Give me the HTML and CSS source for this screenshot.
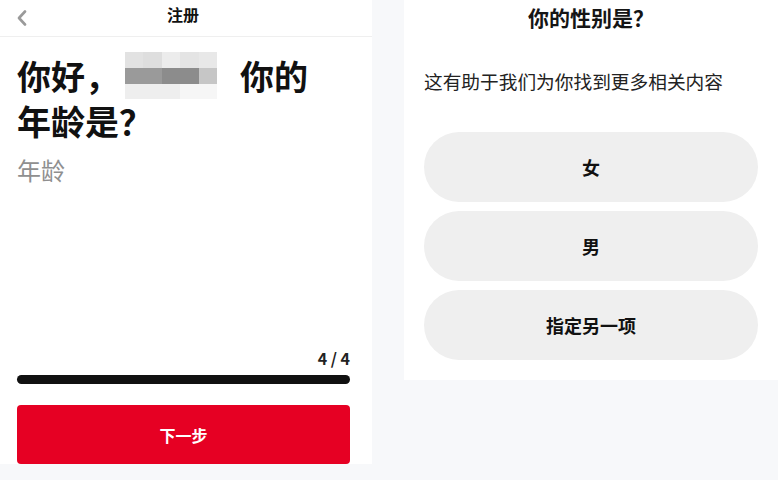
FILE: index.html
```html
<!DOCTYPE html>
<html lang="zh-CN">
<head>
    <meta charset="UTF-8">
    <meta name="viewport" content="width=device-width, initial-scale=1.0">
    <title>注册</title>
    <link rel="stylesheet" href="styles.css">
</head>
<body>
    <div class="screens">
        <!-- Age step -->
        <div class="panel age">
            <div class="topbar">
                <span class="back">
                    <svg width="12" height="16" viewBox="0 0 12 16"><path d="M9 1.5 L3 8 L9 14.5" fill="none" stroke="#9a9a9a" stroke-width="2.6" stroke-linecap="round" stroke-linejoin="round"/></svg>
                </span>
                <span class="topbar-title">注册</span>
            </div>

            <div class="age-body">
                <h1 class="headline">
                    <span class="line">你好，<span class="blur">
                        <i class="b1"></i><i class="b2"></i><i class="b3"></i><i class="b4"></i><i class="b5"></i>
                        <i class="b6"></i><i class="b6"></i><i class="b7"></i><i class="b7"></i><i class="b8"></i>
                        <i class="b9"></i><i class="b9"></i><i class="b9"></i><i class="b0"></i><i class="b0"></i>
                    </span>你的</span>
                    <span class="line">年龄是？</span>
                </h1>
                <div class="age-input">年龄</div>

                <div class="spacer"></div>

                <div class="step">4 / 4</div>
                <div class="progress"><div class="progress-fill" style="width: 100%"></div></div>
                <button class="next">下一步</button>
            </div>
        </div>

        <!-- Gender step -->
        <div class="panel gender">
            <h2>你的性别是？</h2>
            <p class="hint">这有助于我们为你找到更多相关内容</p>
            <div class="options">
                <button class="option">女</button>
                <button class="option">男</button>
                <button class="option">指定另一项</button>
            </div>
        </div>
    </div>
</body>
</html>
```

FILE: styles.css
```css
/* General Styles */
* {
    box-sizing: border-box;
    margin: 0;
    padding: 0;
    font-family: "Noto Sans CJK SC", "Liberation Sans", sans-serif;
}
body {
    background-color: #f7f8fa;
    width: 778px;
    height: 480px;
    overflow: hidden;
}
.screens {
    display: flex;
    align-items: flex-start;
    gap: 32px;
}
.panel {
    background-color: #ffffff;
    color: #111;
}

/* Age panel */
.age {
    width: 372px;
    height: 464px;
    display: flex;
    flex-direction: column;
}
.topbar {
    height: 37px;
    border-bottom: 1px solid #efefef;
    display: flex;
    align-items: center;
    justify-content: center;
    position: relative;
}
.back {
    position: absolute;
    left: 16px;
    top: 7px;
}
.topbar-title {
    font-size: 16px;
    font-weight: bold;
    margin-top: -8px;
    margin-left: -6px;
}
.age-body {
    flex: 1;
    display: flex;
    flex-direction: column;
    padding: 15px 22px 0 17px;
}
.headline {
    font-size: 34px;
    font-weight: bold;
    line-height: 44px;
}
.line {
    display: flex;
    align-items: center;
}
.blur {
    display: grid;
    grid-template-columns: repeat(5, 18.4px);
    grid-template-rows: 16px 16px 15px;
    margin: 0 23px 0 6px;
    width: 92px;
}
.blur i { display: block; }
.b1 { background: #e2e2e2; }
.b2 { background: #dedede; }
.b3 { background: #ececec; }
.b4 { background: #e4e4e4; }
.b5 { background: #e8e8e8; }
.b6 { background: #9a9a9a; }
.b7 { background: #8c8c8c; }
.b8 { background: #c6c6c6; }
.b9 { background: #eeeeee; }
.b0 { background: #f6f6f6; }

.age-input {
    font-size: 24px;
    color: #8f8f8f;
    margin-top: 9px;
}
.spacer {
    flex: 1;
}
.step {
    text-align: right;
    font-size: 16px;
    font-weight: bold;
    color: #222;
    line-height: 20px;
    margin-bottom: 2px;
}
.progress {
    height: 9px;
    border-radius: 5px;
    background-color: #e5e5e5;
    margin-top: 5px;
}
.progress-fill {
    height: 100%;
    border-radius: 5px;
    background-color: #111;
}
.next {
    margin-top: 21px;
    height: 59px;
    border: none;
    border-radius: 4px;
    background-color: #e60023;
    color: #fff;
    font-size: 16px;
    font-weight: bold;
}

/* Gender panel */
.gender {
    width: 374px;
    height: 380px;
    padding: 3px 20px 0 20px;
}
.gender h2 {
    text-align: center;
    font-size: 21px;
    font-weight: bold;
    line-height: 28px;
    color: #151515;
}
.hint {
    margin-top: 37px;
    font-size: 18.7px;
    color: #222;
    line-height: 26px;
}
.options {
    display: flex;
    flex-direction: column;
    gap: 9px;
    margin-top: 38px;
}
.option {
    height: 70px;
    border: none;
    border-radius: 35px;
    background-color: #efefef;
    color: #111;
    font-size: 18px;
    font-weight: bold;
}
```
